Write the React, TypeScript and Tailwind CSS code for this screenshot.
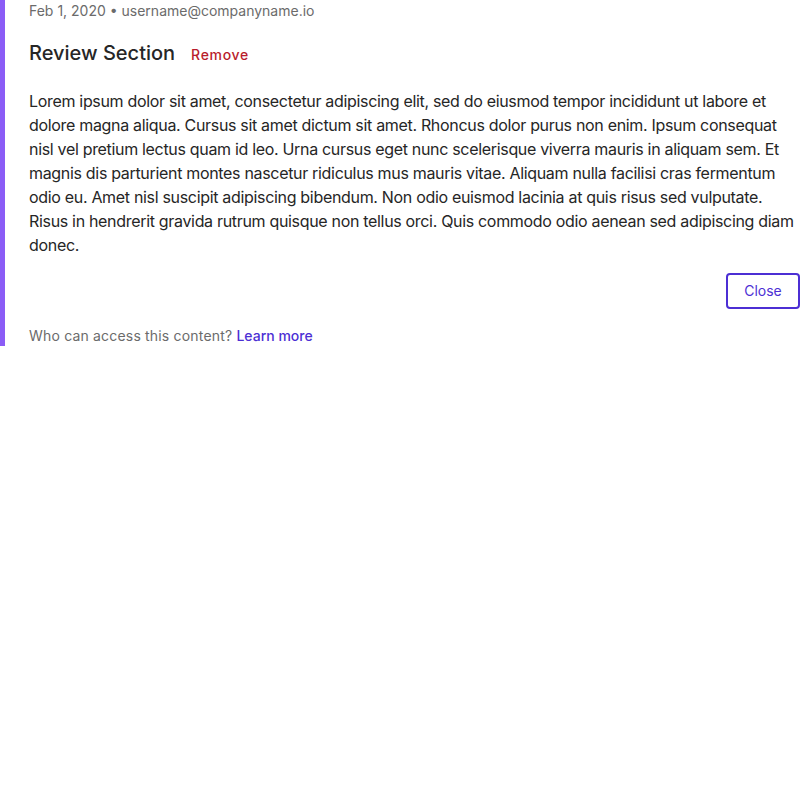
export default function App() {
  return (
    <div className="w-[800px] bg-white font-['Inter','Liberation_Sans',sans-serif]">
      <section className="flex flex-col border-l-[5px] border-[#8b5cf6] pl-6 pt-px">
        <p className="text-sm leading-5 text-[#6b6b6b]">
          Feb 1, 2020 • username@companyname.io
        </p>
        <div className="mt-[18px] flex items-center gap-4">
          <h2 className="text-xl leading-7 font-medium text-[#262626]">Review Section</h2>
          <button className="mt-1 text-sm font-medium tracking-wider text-[#b91c2c]">Remove</button>
        </div>
        <p className="mt-[22px] text-base leading-6 tracking-[-0.02em] text-[#262626]">
          Lorem ipsum dolor sit amet, consectetur adipiscing elit, sed do eiusmod tempor incididunt ut labore et
          dolore magna aliqua. Cursus sit amet dictum sit amet. Rhoncus dolor purus non enim. Ipsum consequat
          nisl vel pretium lectus quam id leo. Urna cursus eget nunc scelerisque viverra mauris in aliquam sem. Et
          magnis dis parturient montes nascetur ridiculus mus mauris vitae. Aliquam nulla facilisi cras fermentum
          odio eu. Amet nisl suscipit adipiscing bibendum. Non odio euismod lacinia at quis risus sed vulputate.
          Risus in hendrerit gravida rutrum quisque non tellus orci. Quis commodo odio aenean sed adipiscing diam
          donec.
        </p>
        <div className="mt-4 flex justify-end">
          <button className="h-9 w-[74px] rounded border-2 border-[#4c2fd4] text-sm text-[#4c2fd4]">
            Close
          </button>
        </div>
        <p className="mt-[17px] text-sm leading-5 tracking-[0.013em] text-[#6b6b6b]">
          Who can access this content?{' '}
          <a href="#" className="font-medium tracking-normal text-[#4c2fd4]">Learn more</a>
        </p>
      </section>
    </div>
  );
}
